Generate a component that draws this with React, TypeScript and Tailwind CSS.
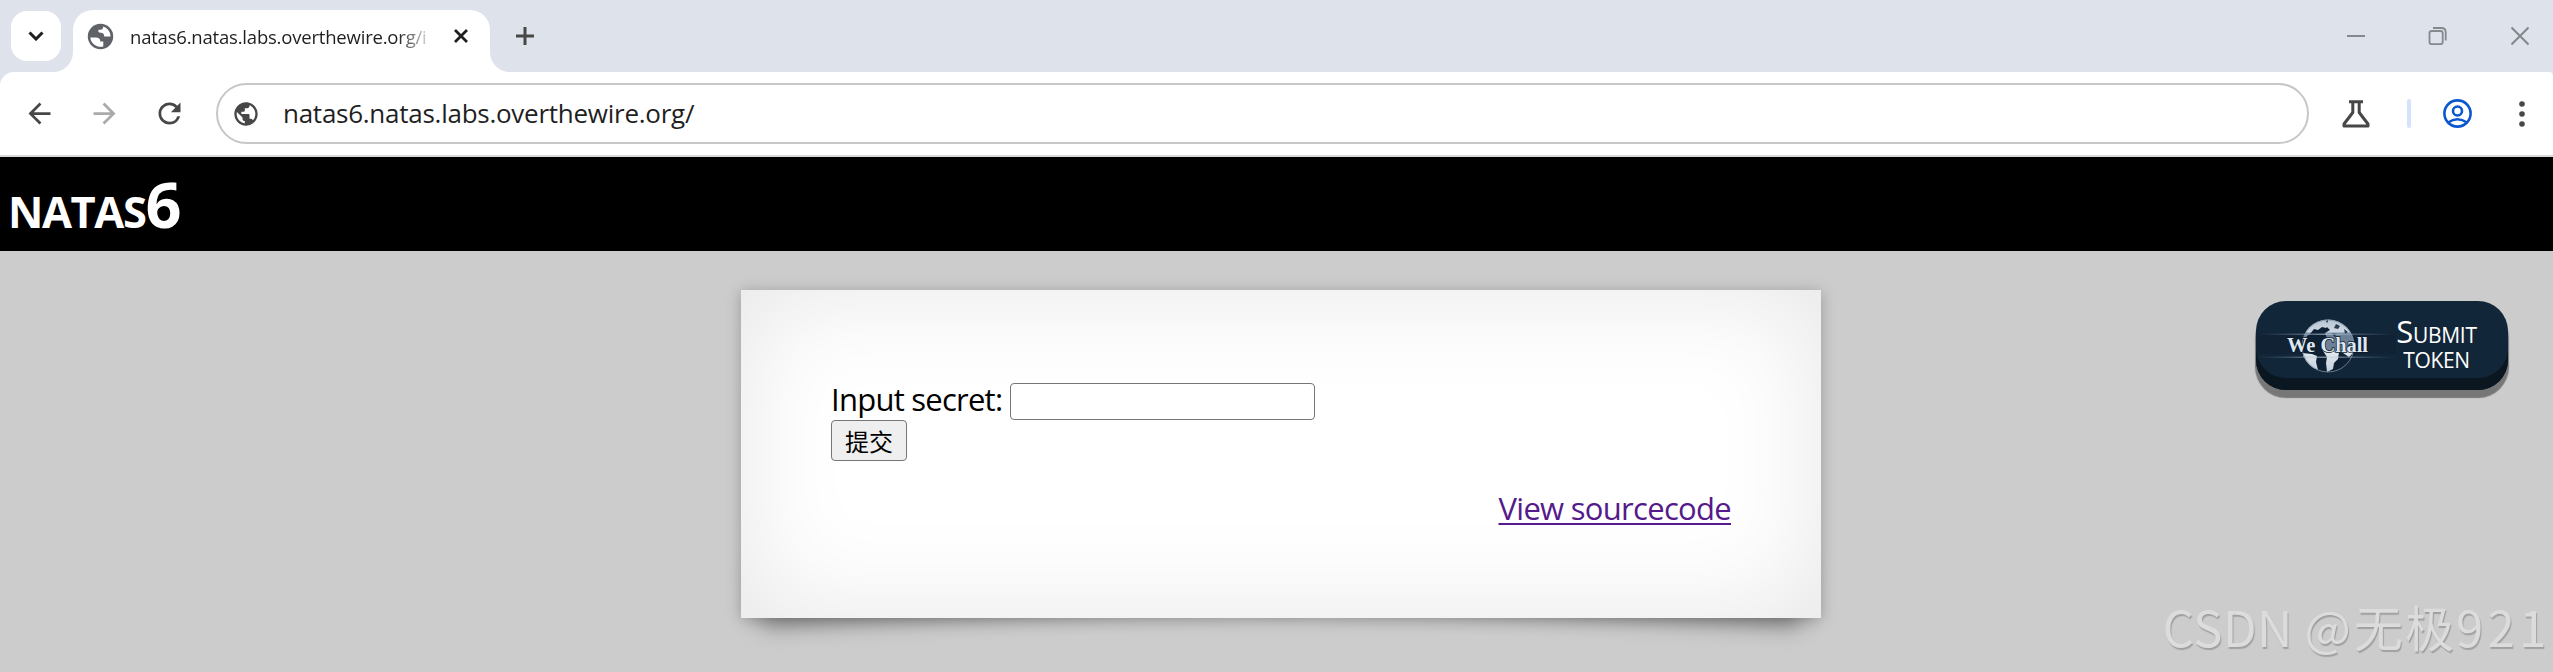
import { MdArrowBack, MdArrowForward, MdPublic, MdRefresh } from 'react-icons/md';

function TabStrip() {
  return (
    <div className="flex h-[72px] items-start bg-[#dee2ea]">
      <button className="mt-[11px] ml-[11px] flex h-[50px] w-[50px] items-center justify-center rounded-2xl bg-white">
        <svg width="16" height="10" viewBox="0 0 16 10" fill="none" stroke="#1f1f1f" strokeWidth="3">
          <path d="M1.5 1.5 8 8l6.500-6.500" />
        </svg>
      </button>

      <div className="relative mt-[10px] ml-3 flex h-[62px] w-[417px] rounded-t-[20px] bg-white">
        {/* curved feet of the active tab */}
        <span className="absolute bottom-0 -left-5 h-5 w-5 overflow-hidden">
          <span className="block h-5 w-5 rounded-br-[20px] shadow-[10px_10px_0_10px_#fff]" />
        </span>
        <span className="absolute -right-5 bottom-0 h-5 w-5 overflow-hidden">
          <span className="block h-5 w-5 rounded-bl-[20px] shadow-[-10px_10px_0_10px_#fff]" />
        </span>

        <svg className="mt-[13px] ml-[14px] h-[27px] w-[27px] shrink-0" viewBox="0 0 27 27">
          <circle cx="13.500" cy="13.500" r="12.700" fill="#5f6368" />
          <path
            d="M3.300 14.500h5.500c3 0 4.500 1.300 4.500 4h3v4.900A10.200 10.200 0 0 1 3.300 14.500ZM15.800 3.600c.8 1.500-.4 2.900-1.700 3.100h-2.600c-.6 1.900.2 3 2.200 3 2.700 0 3.500 1.400 3.500 3.800h6.400A10 10 0 0 0 15.800 3.600Z"
            fill="#fff"
          />
        </svg>
        <div className="mt-[13px] ml-[16px] h-7 w-[300px] overflow-hidden text-[18.500px] leading-[27px] whitespace-nowrap text-[#1f1f1f] [mask-image:linear-gradient(to_right,#000_268px,transparent_304px)]">
          <span className="tracking-[-0.200px]">natas6.natas.labs.overthewire.org/i</span>
        </div>
        <svg className="mt-[19px] ml-6 h-[14px] w-[14px] shrink-0" viewBox="0 0 14 14" stroke="#1f1f1f" strokeWidth="2.800">
          <path d="m1 1 12 12M13 1 1 13" />
        </svg>
      </div>

      <svg className="mt-[27px] ml-[26px]" width="18" height="18" viewBox="0 0 18 18" stroke="#474747" strokeWidth="3">
        <path d="M9 0v18M0 9h18" />
      </svg>

      <div className="mt-[26px] mr-6 ml-auto flex items-center gap-[63px] text-[#85888d]">
        <svg width="18" height="20" viewBox="0 0 18 20" stroke="currentColor" strokeWidth="2">
          <path d="M0 10h18" />
        </svg>
        <svg width="20" height="20" viewBox="0 0 20 20" fill="none" stroke="currentColor" strokeWidth="1.800">
          <rect x="1.500" y="5" width="13.200" height="13.200" rx="2.200" />
          <path d="M5 2h8.500q4.200 0 4.200 4.200v8.300" />
        </svg>
        <svg width="18" height="20" viewBox="0 0 18 20" stroke="currentColor" strokeWidth="2">
          <path d="m.5 1.500 17 17M17.500 1.500l-17 17" />
        </svg>
      </div>
    </div>
  );
}

function Toolbar() {
  return (
    <div className="bg-[#dee2ea]">
      <div className="flex h-[85px] items-center rounded-tl-[14px] rounded-tr-[4px] border-b-2 border-[#dadada] bg-white text-[#474747]">
        <MdArrowBack className="ml-[23px] h-[33px] w-[33px]" />
        <MdArrowForward className="ml-8 h-[33px] w-[33px] text-[#aaaaaa]" />
        <MdRefresh className="ml-8 h-[33px] w-[33px]" />
        <div className="ml-[30px] flex h-[61px] w-[2093px] items-center rounded-full border-2 border-[#c7c7c7]">
          <MdPublic className="ml-[14px] h-7 w-7" />
          <span className="ml-[23px] text-[26px] tracking-[-0.260px] text-[#1f1f1f]">
            natas6.natas.labs.overthewire.org/
          </span>
        </div>
        <svg className="ml-[33px]" width="28" height="28" viewBox="0 0 28 28" fill="none" stroke="currentColor" strokeWidth="3" strokeLinejoin="round">
          <path d="M7 1.800h14M10.800 2v10.500L2 24v2h24v-2l-8.800-11.500V2" />
        </svg>
        <span className="ml-[37px] h-[29px] w-1 rounded-sm bg-[#d3e3fd]" />
        <svg className="ml-8" width="29" height="29" viewBox="0 0 29 29" fill="none" stroke="#0b57d0" strokeWidth="2.600">
          <circle cx="14.500" cy="14.500" r="13.100" />
          <circle cx="14.500" cy="12" r="4.500" />
          <path d="M5 23.500q9.500-6.500 19 0" />
        </svg>
        <svg className="ml-[47px]" width="6" height="26" viewBox="0 0 6 26" fill="currentColor">
          <circle cx="3" cy="3" r="2.800" />
          <circle cx="3" cy="13" r="2.800" />
          <circle cx="3" cy="23" r="2.800" />
        </svg>
      </div>
    </div>
  );
}

function WeChallLogo() {
  return (
    <svg className="h-[60px] w-[140px] shrink-0" viewBox="0 0 140 60">
      <defs>
        <linearGradient id="ray">
          <stop offset="0" stopColor="#6f8ba8" stopOpacity="0" />
          <stop offset=".5" stopColor="#c4d6e8" />
          <stop offset="1" stopColor="#6f8ba8" stopOpacity="0" />
        </linearGradient>
        <linearGradient id="land" x2="0" y2="1">
          <stop offset="0" stopColor="#b4c1cf" />
          <stop offset=".27" stopColor="#cdd8e3" />
          <stop offset=".3" stopColor="#6c8098" />
          <stop offset=".6" stopColor="#6c8098" />
          <stop offset=".63" stopColor="#e2e9f0" />
          <stop offset="1" stopColor="#c3ceda" />
        </linearGradient>
        <clipPath id="disc">
          <circle cx="72" cy="31" r="26.500" />
        </clipPath>
      </defs>
      <path d="M0 18h140v21H0z" fill="#0d1e30" opacity=".5" />
      <g clipPath="url(#disc)">
        <path d="M45 3h54v56H45z" fill="#0e2033" />
        <path
          d="m47 24 5-13 9-7 12-2-3 5 4 2-4 4-4-1-4 3-4-1-4 5-3 2-2 6ZM72 4l10-2 10 5 7 14 1 14-7 7-6-4-4-1-1 7-4 4-1 6-6 3-1-9 1-6-4-6-2-8 6-5-2-5 5-3-3-3ZM46 38l10 1 5 2-1 6 2 8-8-3-7-8Z"
          fill="url(#land)"
        />
        <path d="m80 9 4 2-2 3-4-1zM88 14l4 3-3 2zM76 18l5 1-3 3z" fill="#2a3d52" />
      </g>
      <circle cx="72" cy="31" r="26" fill="none" stroke="#8193a6" strokeWidth="1" opacity=".8" />
      <path d="M0 18.500h140v1.500H0zM0 41.500h140v1.500H0z" fill="url(#ray)" opacity=".6" />
      <text
        x="31"
        y="37"
        textLength="81"
        lengthAdjust="spacingAndGlyphs"
        fontFamily="Liberation Serif, serif"
        fontWeight="bold"
        fontSize="21.500"
        fill="#dfe8f2"
        stroke="#0b1a2a"
        strokeWidth="1.500"
        paintOrder="stroke"
      >
        We Chall
      </text>
    </svg>
  );
}

export default function App() {
  return (
    <div className="h-[672px] w-[2553px] overflow-hidden bg-[#cccccc] font-['Open_Sans','Noto_Sans_CJK_SC',sans-serif] text-black">
      <TabStrip />
      <Toolbar />

      <h1 className="flex h-[94px] items-baseline bg-black pl-2 leading-[94px] font-bold text-white">
        <span className="text-[43.500px] tracking-[-1.400px]">NATAS</span>
        <span className="text-[63px]">6</span>
      </h1>

      <main className="relative flex h-[421px] items-start pt-[39px]">
        {/* paper card with lifted corners */}
        <div className="relative isolate ml-[741px] h-[328px] w-[1080px]">
          <span className="absolute bottom-[27px] left-[18px] -z-10 h-[20%] w-1/2 -rotate-3 shadow-[0_22px_22px_rgba(0,0,0,0.35)]" />
          <span className="absolute right-[18px] bottom-[27px] -z-10 h-[20%] w-1/2 rotate-3 shadow-[0_22px_22px_rgba(0,0,0,0.35)]" />
          <div className="h-full bg-white px-[90px] pt-[93px] shadow-[0_2px_14px_rgba(0,0,0,0.25),inset_0_0_108px_rgba(0,0,0,0.1)]">
            <form className="text-[31px]">
              <div className="flex h-[37px] items-center">
                <label className="w-[179px] pb-[5px] leading-[37px] tracking-[-0.750px] whitespace-nowrap">Input secret:</label>
                <input className="h-[37px] w-[305px] rounded-[4px] border border-[#767676] bg-white" />
              </div>
              <button
                type="button"
                className="flex h-[41px] w-[76px] items-center justify-center rounded-[4px] border border-[#767676] bg-[#efefef] font-['Noto_Sans_CJK_SC',sans-serif] text-2xl"
              >
                提交
              </button>
            </form>
            <div className="mt-[26px] flex justify-end text-[31px] leading-[42px] tracking-[-0.700px]">
              <a className="text-[#551a8b] underline decoration-2 underline-offset-[3px]">View sourcecode</a>
            </div>
          </div>
        </div>

        <div className="mt-[11px] mr-[45px] ml-auto flex h-[89px] w-[252px] rounded-[30px] bg-[#122639] pt-[14px] shadow-[inset_0_-12px_0_#0a1620,0_7px_1px_1px_#777]">
          <WeChallLogo />
          <div className="flex w-[81px] flex-col items-center text-white">
            <span className="flex h-[32px] items-baseline leading-[32px] tracking-[-0.300px]">
              <span className="text-[31px]">S</span>
              <span className="text-[21px]">UBMIT</span>
            </span>
            <span className="text-[21px] leading-[27px] tracking-[-0.300px]">TOKEN</span>
          </div>
        </div>

        <div className="absolute right-[2px] bottom-[10px] font-['Noto_Sans_CJK_SC',sans-serif] text-[49px] leading-[72px] font-normal whitespace-nowrap text-[#dcdcdc] [text-shadow:1px_2px_1px_#a0a0a0]">
          <span className="tracking-[0.500px]">CSDN </span>
          <span className="tracking-[3px]">@</span>
          <span className="tracking-[2px]">无极</span>
          <span className="tracking-[4.500px]">921</span>
        </div>
      </main>
    </div>
  );
}
